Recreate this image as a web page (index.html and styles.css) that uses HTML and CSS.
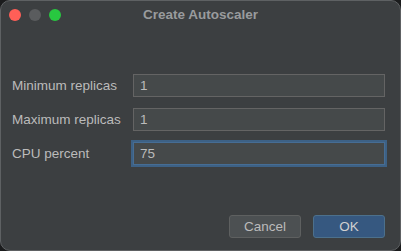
FILE: index.html
```html
<!DOCTYPE html>
<html lang="en">
<head>
    <meta charset="UTF-8">
    <title>Create Autoscaler</title>
    <link rel="stylesheet" href="styles.css">
</head>
<body>
    <div class="window">
        <div class="titlebar">
            <div class="lights">
                <span class="light close"></span>
                <span class="light minimize"></span>
                <span class="light zoom"></span>
            </div>
            <div class="title">Create Autoscaler</div>
        </div>
        <div class="form">
            <div class="row">
                <label for="min-replicas">Minimum replicas</label>
                <input type="text" id="min-replicas" value="1">
            </div>
            <div class="row">
                <label for="max-replicas">Maximum replicas</label>
                <input type="text" id="max-replicas" value="1">
            </div>
            <div class="row">
                <label for="cpu-percent">CPU percent</label>
                <input type="text" id="cpu-percent" class="focused" value="75">
            </div>
        </div>
        <div class="buttons">
            <button class="btn">Cancel</button>
            <button class="btn primary">OK</button>
        </div>
    </div>
</body>
</html>
```

FILE: styles.css
```css
html, body {
    margin: 0;
    height: 100%;
    background: #1b1c1d;
}

body {
    font-family: "Liberation Sans", Arial, sans-serif;
    font-size: 13.5px;
    color: #bbbbbb;
}

.window {
    box-sizing: border-box;
    width: 401px;
    height: 251px;
    background: #3c3f41;
    border: 1px solid #5e6163;
    border-radius: 10px;
    display: flex;
    flex-direction: column;
}

.titlebar {
    position: relative;
    height: 27px;
    display: flex;
    align-items: center;
}

.lights {
    display: flex;
    gap: 8px;
    padding-left: 8px;
}

.light {
    width: 12px;
    height: 12px;
    border-radius: 50%;
}

.close { background: #ff5f57; }
.minimize { background: #5a5c5e; }
.zoom { background: #28c840; }

.title {
    position: absolute;
    left: 0;
    right: 0;
    top: 0;
    line-height: 27px;
    text-align: center;
    font-weight: bold;
    font-size: 13.5px;
    color: #999b9d;
}

.form {
    display: flex;
    flex-direction: column;
    gap: 11px;
    padding: 46px 15px 0 11px;
}

.row {
    display: flex;
    align-items: center;
}

.row label {
    width: 121px;
}

.row input {
    flex: 1;
    box-sizing: border-box;
    height: 23px;
    margin: 0;
    padding: 0 6px;
    background: #45494a;
    border: 1px solid #646464;
    border-radius: 0;
    color: #bbbbbb;
    font-family: inherit;
    font-size: 13.5px;
    outline: none;
}

.row input.focused {
    border-color: #466d94;
    box-shadow: 0 0 0 2px #3d6185;
}

.buttons {
    margin-top: auto;
    display: flex;
    justify-content: flex-end;
    gap: 12px;
    padding: 0 15px 12px 0;
}

.btn {
    width: 72px;
    height: 23px;
    border: 1px solid #5e6060;
    border-radius: 3px;
    background: #4c5052;
    color: #bbbbbb;
    font-family: inherit;
    font-size: 13.5px;
}

.btn.primary {
    background: #365880;
    border-color: #4c708c;
    color: #d0d0d0;
}
```
